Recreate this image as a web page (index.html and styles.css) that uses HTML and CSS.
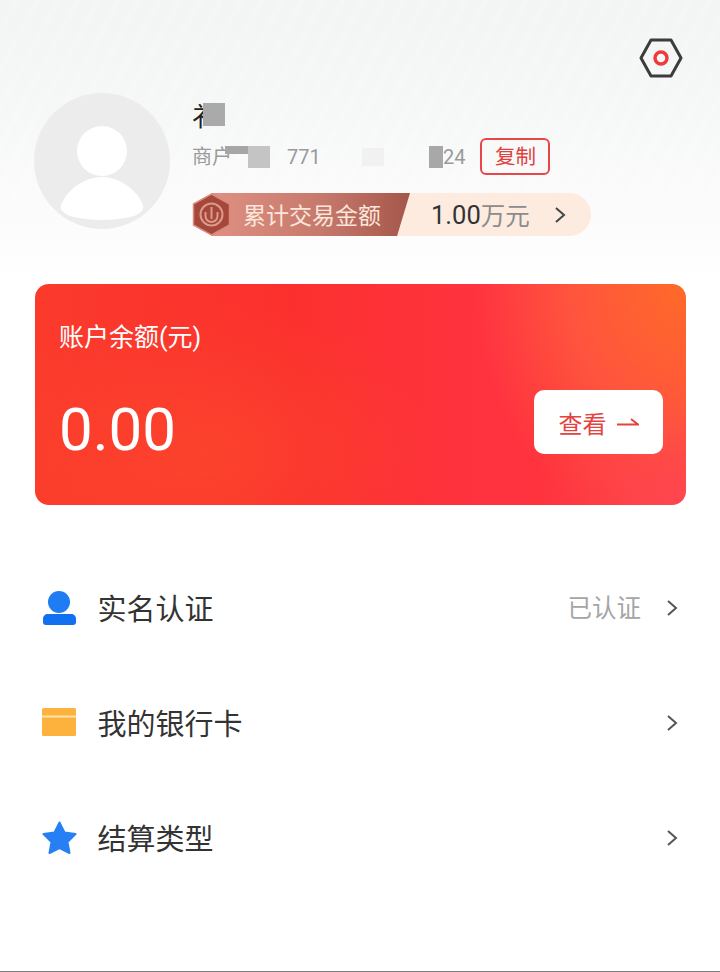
FILE: index.html
```html
<!DOCTYPE html>
<html lang="zh-CN">
<head>
    <meta charset="UTF-8">
    <meta name="viewport" content="width=device-width, initial-scale=1.0">
    <title>我的</title>
    <link rel="stylesheet" href="styles.css">
</head>
<body>
    <div class="page">
        <header class="header">
            <div class="settings-row">
                <svg class="settings" viewBox="0 0 44 40" width="44" height="40">
                    <path d="M12 2H32L42 20L32 38H12L2 20Z" fill="none" stroke="#3c3c3c" stroke-width="3" stroke-linejoin="round"/>
                    <circle cx="22" cy="20" r="6" fill="none" stroke="#ee3a3a" stroke-width="3.4"/>
                </svg>
            </div>

            <div class="profile">
                <svg class="avatar" viewBox="0 0 136 136" width="136" height="136">
                    <circle cx="68" cy="68" r="68" fill="#ececec"/>
                    <circle cx="68" cy="58" r="25" fill="#fff"/>
                    <path d="M27 112C34 95 52 84 68 84C84 84 102 95 109 112C111 118 104 122 96 124C78 128 58 128 40 124C32 122 25 118 27 112Z" fill="#fff"/>
                </svg>
                <div class="info">
                    <div class="name">
                        <span class="name-cut">衤</span>
                        <span class="name-blot"></span>
                    </div>
                    <div class="merchant">
                        <span>商户</span>
                        <span class="blot blot-a"></span>
                        <span class="blot blot-b"></span>
                        <span class="num-a">771</span>
                        <span class="blot blot-c"></span>
                        <span class="blot blot-d"></span>
                        <span>24</span>
                        <span class="copy">复制</span>
                    </div>
                    <div class="total">
                        <svg class="badge" viewBox="0 0 39 43" width="39" height="43">
                            <path d="M19.500 1L37.500 11V32L19.500 42L1.500 32V11Z" fill="#a5473a" stroke="#d98a7c" stroke-width="1.500"/>
                            <circle cx="19.500" cy="21.500" r="11" fill="none" stroke="#dc9a8a" stroke-width="2"/>
                            <path d="M13.500 19V23A6 6 0 0 0 25.500 23V19M19.500 14V26" fill="none" stroke="#dc9a8a" stroke-width="2"/>
                        </svg>
                        <div class="total-label">累计交易金额</div>
                        <span class="total-num">1.00</span><span class="total-unit">万元</span>
                        <svg class="total-arrow" viewBox="0 0 12 18" width="12" height="18">
                            <path d="M2 2L10 9L2 16" fill="none" stroke="#444" stroke-width="2"/>
                        </svg>
                    </div>
                </div>
            </div>
        </header>

        <section class="balance">
            <div class="balance-label">账户余额(元)</div>
            <div class="balance-row">
                <div class="balance-num">0.00</div>
                <div class="view-btn">
                    <span>查看</span>
                    <svg viewBox="0 0 22 12" width="22" height="12">
                        <path d="M0 8.500H21L14 3" fill="none" stroke="#e6423f" stroke-width="2"/>
                    </svg>
                </div>
            </div>
        </section>

        <ul class="menu">
            <li class="menu-item">
                <svg class="menu-icon" viewBox="0 0 34 34" width="34" height="34">
                    <circle cx="17" cy="11" r="11" fill="#1f7cf2"/>
                    <path d="M6 23H29C32 23 34 25 34 28V31C34 33 33 34 31 34H4C2 34 1 33 1 31V28C1 25 3 23 6 23Z" fill="#126ff0"/>
                </svg>
                <span class="menu-text">实名认证</span>
                <span class="menu-value">已认证</span>
                <svg class="chevron" viewBox="0 0 12 18" width="12" height="18">
                    <path d="M2 2L10 9L2 16" fill="none" stroke="#555" stroke-width="2"/>
                </svg>
            </li>
            <li class="menu-item">
                <svg class="menu-icon" viewBox="0 0 34 34" width="34" height="34">
                    <rect x="0" y="2" width="34" height="28" rx="1.500" fill="#fdb23e"/>
                    <rect x="0" y="9.500" width="34" height="2" fill="#ffe2ad"/>
                </svg>
                <span class="menu-text">我的银行卡</span>
                <svg class="chevron" viewBox="0 0 12 18" width="12" height="18">
                    <path d="M2 2L10 9L2 16" fill="none" stroke="#555" stroke-width="2"/>
                </svg>
            </li>
            <li class="menu-item">
                <svg class="menu-icon" viewBox="0.500 0 34 34" width="34" height="34">
                    <path d="M18 1.500L23 11.500L34 13L26 21L28 32L18 27L8 32L10 21L2 13L13 11.500Z" fill="#2680f3" stroke="#2680f3" stroke-width="2" stroke-linejoin="round"/>
                </svg>
                <span class="menu-text">结算类型</span>
                <svg class="chevron" viewBox="0 0 12 18" width="12" height="18">
                    <path d="M2 2L10 9L2 16" fill="none" stroke="#555" stroke-width="2"/>
                </svg>
            </li>
        </ul>
    </div>
</body>
</html>
```

FILE: styles.css
```css
* {
    box-sizing: border-box;
}
body {
    margin: 0;
    background: #fff;
    font-family: Roboto, "Noto Sans CJK SC", sans-serif;
    color: #333;
}
.page {
    display: flex;
    flex-direction: column;
    height: 972px;
    border-bottom: 1px solid #808080;
    overflow: hidden;
}

/* header */
.header {
    height: 284px;
    padding-top: 38px;
    background:
        repeating-linear-gradient(118deg, rgba(255,255,255,0) 0, rgba(255,255,255,0) 12px, rgba(255,255,255,0.14) 12px, rgba(255,255,255,0.14) 18px),
        linear-gradient(180deg, #f3f4f4 0%, #f6f7f7 40%, #fbfbfb 72%, #fff 100%);
}
.settings-row {
    display: flex;
    justify-content: flex-end;
    padding-right: 37px;
}
.profile {
    display: flex;
    gap: 22px;
    margin-top: 15px;
    padding-left: 34px;
}
.avatar {
    flex: none;
}
.info {
    padding-top: 10px;
}
.name {
    display: flex;
    height: 27px;
}
.name-cut {
    width: 26px;
    font-size: 26px;
    line-height: 29px;
    color: #222;
}
.name-blot {
    width: 22px;
    height: 23px;
    margin-left: -15px;
    background: #aaa;
}
.merchant {
    display: flex;
    align-items: center;
    height: 37px;
    margin-top: 8px;
    font-size: 20px;
    line-height: 40px;
    color: #9a9a9a;
}
.blot {
    height: 22px;
}
.blot-a {
    width: 23px;
    height: 8px;
    margin-left: -7px;
    margin-bottom: 14px;
    background: #a6a6a6;
}
.blot-b {
    width: 22px;
    background: #c4c4c4;
}
.num-a {
    width: 33px;
    margin-left: 17px;
}
.blot-c {
    width: 22px;
    height: 18px;
    margin-left: 42px;
    background: #f1f1f1;
}
.blot-d {
    width: 14px;
    margin-left: 45px;
    background: #a8a8a8;
}
.copy {
    display: flex;
    align-items: center;
    justify-content: center;
    width: 70px;
    height: 37px;
    margin-left: 15px;
    border: 2px solid #e8474a;
    border-radius: 6px;
    font-size: 20.500px;
    line-height: 24px;
    color: #e0403f;
}
.total {
    display: flex;
    align-items: center;
    width: 399px;
    height: 43px;
    margin-top: 18px;
    border-radius: 0 22px 22px 0;
    background: linear-gradient(90deg, transparent 20px, #fdebe0 20px);
}
.badge {
    flex: none;
    position: relative;
    z-index: 1;
}
.total-label {
    display: flex;
    align-items: center;
    width: 199px;
    height: 43px;
    margin-left: -20px;
    padding: 0 0 2px 32px;
    font-size: 23px;
    color: #fbe6dc;
    background: linear-gradient(90deg, #df9082 0%, #c67a6c 55%, #a5564a 100%);
    clip-path: polygon(0 0, 100% 0, 93.500% 100%, 0 100%);
}
.total-num {
    margin-left: 21px;
    font-size: 25.500px;
    color: #333;
}
.total-unit {
    font-size: 24.500px;
    color: #8c8c8c;
}
.total-arrow {
    margin-left: 24px;
}

/* balance card */
.balance {
    display: flex;
    flex-direction: column;
    height: 221px;
    margin: 0 34px 0 35px;
    padding: 37px 23px 0 24px;
    border-radius: 14px;
    color: #fff;
    background:
        radial-gradient(ellipse 150px 100px at 100% 100%, rgba(255,72,84,0.9), rgba(255,72,84,0)),
        radial-gradient(ellipse 210px 260px at 100% 0%, rgba(255,106,40,1) 0%, rgba(255,88,62,0.9) 55%, rgba(255,80,60,0) 100%),
        radial-gradient(ellipse 240px 150px at 170px 170px, rgba(252,76,44,0.6), rgba(252,76,44,0)),
        linear-gradient(90deg, #fb3a2c 0%, #fb302e 40%, #ff3340 70%, #fd3338 100%);
}
.balance-label {
    font-size: 25px;
    line-height: 34px;
}
.balance-row {
    display: flex;
    align-items: flex-start;
    justify-content: space-between;
    margin-top: 35px;
}
.balance-num {
    padding-top: 8px;
    font-size: 60px;
    line-height: 64px;
}
.view-btn {
    display: flex;
    align-items: center;
    justify-content: center;
    gap: 10px;
    width: 129px;
    height: 64px;
    border-radius: 10px;
    background: #fff;
    font-size: 24px;
    color: #e6423f;
}

/* menu */
.menu {
    margin: 45px 0 0;
    padding: 0;
    list-style: none;
}
.menu-item {
    display: flex;
    align-items: center;
    height: 115px;
    padding: 0 42px;
}
.menu-icon {
    flex: none;
    overflow: visible;
}
.menu-text {
    margin-left: 21.500px;
    margin-bottom: 2px;
    font-size: 29px;
    color: #333;
}
.menu-value {
    margin-left: auto;
    margin-bottom: 2px;
    font-size: 24.500px;
    color: #a5a5a5;
}
.chevron {
    flex: none;
    margin-left: 25px;
}
.menu-item .menu-text + .chevron {
    margin-left: auto;
}
```
